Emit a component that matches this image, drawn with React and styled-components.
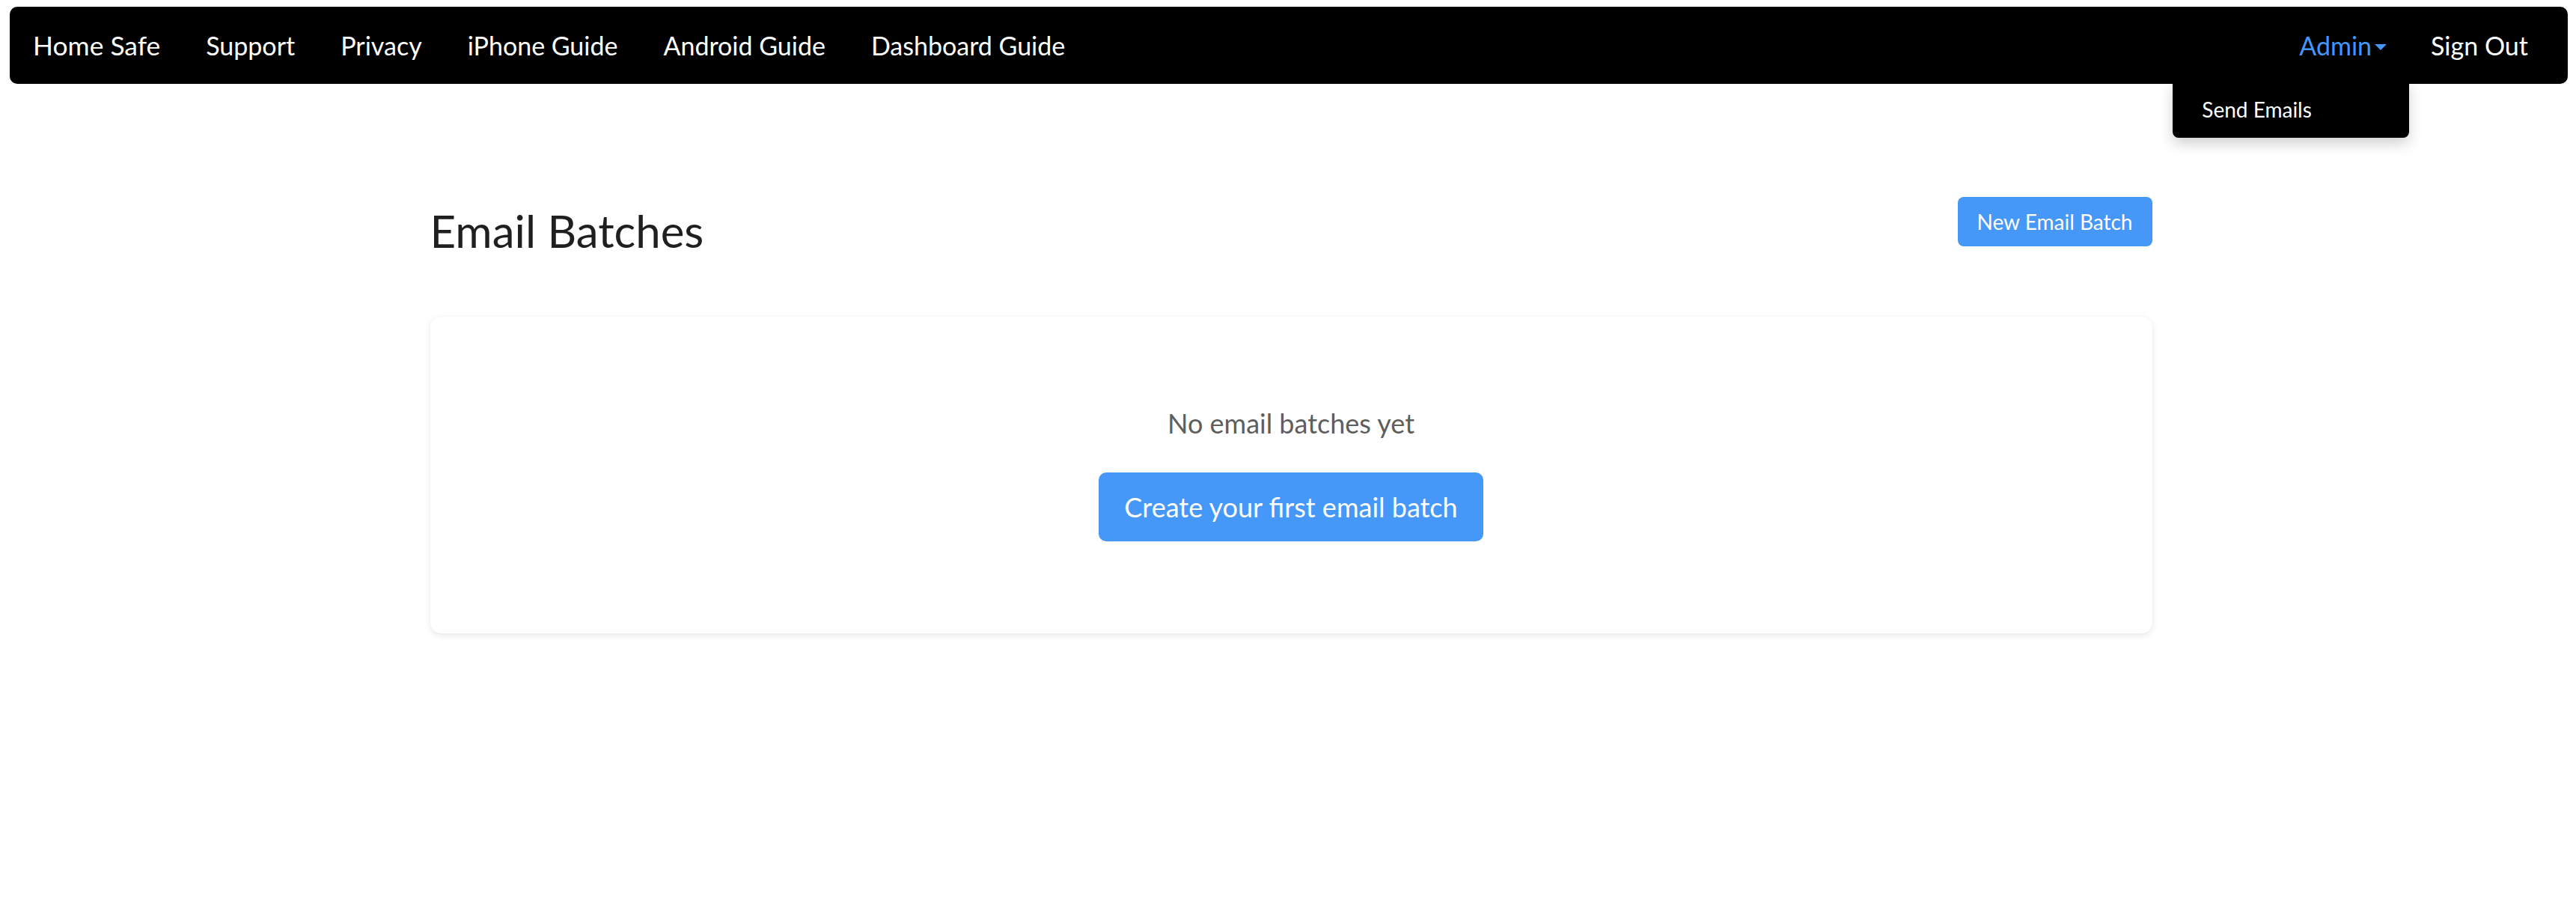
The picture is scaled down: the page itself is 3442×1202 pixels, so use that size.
import React from 'react';
import styled, { createGlobalStyle } from 'styled-components';

const GlobalStyle = createGlobalStyle`
body{
    margin:0;
    background:#fff;
    font-family: Lato, "Open Sans", sans-serif;
}
`;

const Page = styled.div`
width:100%;
min-height:1202px;
padding: 9px 11px 0 13px;
box-sizing:border-box;
`;

const NavBar = styled.nav`
display:flex;
align-items:center;
justify-content:space-between;
height:103px;
background:#000;
border-radius:10px;
padding: 0 40px 0 18px;
box-sizing:border-box;
`;

const NavGroup = styled.div`
display:flex;
align-items:center;
`;

const NavLink = styled.a`
color:${props => props.active ? '#4497f7' : '#fff'};
font-size:${props => props.brand ? '35.4px' : '34px'};
font-weight:400;
text-decoration:none;
cursor:pointer;
padding: 0 13px;
display:flex;
align-items:center;
& + &{
    margin-left:35px;
}
`;

const Caret = styled.span`
display:inline-block;
width:0;
height:0;
margin-left:4px;
margin-top:4px;
border-left:8px solid transparent;
border-right:8px solid transparent;
border-top:8px solid #4497f7;
`;

const AdminWrap = styled.div`
position:relative;
margin-right:33px;
`;

const Dropdown = styled.div`
position:absolute;
top:68px;
left:-156px;
width:316px;
height:76px;
background:#000;
border-radius:0 0 8px 8px;
box-shadow: 0 8px 18px rgba(0,0,0,0.18);
display:flex;
align-items:center;
padding-left:39px;
box-sizing:border-box;
`;

const DropItem = styled.a`
color:#fff;
font-size:28px;
cursor:pointer;
`;

const Container = styled.main`
width:2301px;
margin: 0 auto;
transform: translateX(3px);
`;

const Header = styled.div`
display:flex;
justify-content:space-between;
align-items:flex-start;
margin-top:151px;
margin-bottom:79px;
`;

const Title = styled.h1`
margin:0;
margin-top:9px;
font-size:60px;
font-weight:400;
line-height:72px;
color:#1f1f1f;
`;

const Button = styled.button`
background:#4597f8;
color:#fff;
border:none;
font-family: Lato, "Open Sans", sans-serif;
font-size:${props => props.large ? '36px' : '28px'};
padding:${props => props.large ? '0 34px' : '0 26px'};
height:${props => props.large ? '92px' : '66px'};
border-radius:${props => props.large ? '10px' : '8px'};
cursor:pointer;
`;

const Card = styled.div`
background:#fff;
border-radius:14px;
box-shadow: 0 3px 8px rgba(0,0,0,0.09), 0 0 2px rgba(0,0,0,0.05);
height:423px;
display:flex;
flex-direction:column;
align-items:center;
padding-top:115px;
box-sizing:border-box;
`;

const EmptyText = styled.p`
margin:0 0 39px;
font-size:36px;
line-height:54px;
color:#5e5e5e;
`;

export default function App() {
    return (
        <Page>
            <GlobalStyle />
            <NavBar>
                <NavGroup>
                    <NavLink brand>Home Safe</NavLink>
                    <NavLink>Support</NavLink>
                    <NavLink>Privacy</NavLink>
                    <NavLink>iPhone Guide</NavLink>
                    <NavLink>Android Guide</NavLink>
                    <NavLink>Dashboard Guide</NavLink>
                </NavGroup>
                <NavGroup>
                    <AdminWrap>
                        <NavLink active>Admin<Caret /></NavLink>
                        <Dropdown>
                            <DropItem>Send Emails</DropItem>
                        </Dropdown>
                    </AdminWrap>
                    <NavLink>Sign Out</NavLink>
                </NavGroup>
            </NavBar>
            <Container>
                <Header>
                    <Title>Email Batches</Title>
                    <Button>New Email Batch</Button>
                </Header>
                <Card>
                    <EmptyText>No email batches yet</EmptyText>
                    <Button large>Create your first email batch</Button>
                </Card>
            </Container>
        </Page>
    );
}
